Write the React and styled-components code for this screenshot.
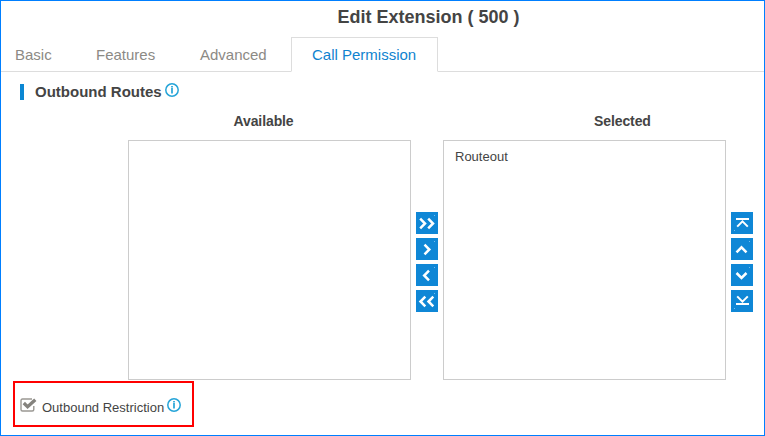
import React from "react";
import styled, { createGlobalStyle } from "styled-components";

const GlobalStyle = createGlobalStyle`
  * { box-sizing: border-box; }
  body { margin: 0; background: #fff; font-family: "Liberation Sans", Arial, sans-serif; }
`;

const Dialog = styled.main`
  width: 765px;
  height: 436px;
  border: 1px solid #007fff;
  background: #fff;
  color: #444;
  overflow: hidden;
`;

const Title = styled.h1`
  margin: 0;
  height: 36px;
  padding: 6px 0 0 336.5px;
  font-size: 18px;
  line-height: 20px;
  white-space: pre;
`;

const Tabs = styled.nav`
  display: flex;
  height: 35px;
  box-shadow: inset 0 -1px #ddd;
`;

const Tab = styled.button`
  flex: none;
  width: ${(p) => p.$width}px;
  height: 35px;
  padding: 1px 0 0 ${(p) => p.$inset}px;
  border: 1px solid ${(p) => (p.$active ? "#ddd" : "transparent")};
  border-bottom-color: ${(p) => (p.$active ? "#fff" : "transparent")};
  background: ${(p) => (p.$active ? "#fff" : "transparent")};
  color: ${(p) => (p.$active ? "#0f83cf" : "#8c8a85")};
  font: 15px/32px "Liberation Sans", Arial, sans-serif;
  text-align: left;
  white-space: nowrap;
`;

const SectionHeading = styled.h2`
  display: flex;
  margin: 12px 0 0 19px;
  height: 16px;
  padding-left: 11px;
  border-left: 4px solid #0b87d3;
  font-size: 15px;
  line-height: 16px;
  white-space: nowrap;
`;

const InfoSvg = styled.svg`
  flex: none;
  width: 14px;
  height: 14px;
  margin: ${(p) => p.$top}px 0 0 ${(p) => p.$gap}px;
`;

const Transfer = styled.section`
  display: flex;
  margin: 14px 0 0 127px;
`;

const Column = styled.div`
  width: 283px;
`;

const ColumnTitle = styled.h3`
  margin: 0;
  height: 26px;
  padding-left: ${(p) => p.$inset}px;
  font-size: 14px;
  line-height: 15px;
  letter-spacing: -0.1px;
`;

const List = styled.ul`
  height: 240px;
  margin: 0;
  padding: 8px 11px;
  border: 1px solid #ccc;
  list-style: none;
  font-size: 13px;
  line-height: 16px;
`;

const ButtonStack = styled.div`
  display: flex;
  flex-direction: column;
  gap: 4px;
  padding: 98px 5px 0;
`;

const IconButton = styled.button`
  display: block;
  width: 22px;
  height: 22px;
  padding: 0;
  border: 0;
  background: #0f87d6;

  svg {
    display: block;
  }
`;

const Restriction = styled.label`
  display: flex;
  width: 181px;
  height: 46px;
  margin: 1px 0 0 12px;
  padding: 14px 0 0 5px;
  border: 2px solid #f00;
  font-size: 13px;
  line-height: 22px;
  white-space: nowrap;
`;

const CheckSvg = styled.svg`
  flex: none;
  width: 18px;
  height: 16px;
  margin: 0 4px 0 0;
`;

const paths = {
  addAll: "M4.2 6.7L9 11.5L4.2 16.3M12.2 6.7L17 11.5L12.2 16.3",
  add: "M8.5 6.7L13.3 11.5L8.5 16.3",
  remove: "M13 6.7L8.2 11.5L13 16.3",
  removeAll: "M9.3 6.7L4.5 11.5L9.3 16.3M17.3 6.7L12.5 11.5L17.3 16.3",
  top: "M5 7H18M6.2 14.6L11.5 9.3L16.8 14.6",
  up: "M5.5 14.3L10.5 9.3L15.5 14.3",
  down: "M5.5 9L10.5 14L15.5 9",
  bottom: "M5 14H18M6.2 6.4L11.5 11.7L16.8 6.4",
};

function ActionButton({ action, label }) {
  const edge = action === "top" || action === "bottom";
  return (
    <IconButton aria-label={label}>
      <svg width="22" height="22" viewBox="0 0 22 22" fill="none" stroke="#fff">
        <path d={paths[action]} strokeWidth={edge ? 2 : 2.5} />
        <rect x={edge ? 3 : 18} y={edge ? 18 : 3} width="1" height="1" fill="#6fbcf0" stroke="none" />
      </svg>
    </IconButton>
  );
}

function Info({ top, gap }) {
  return (
    <InfoSvg $top={top} $gap={gap} viewBox="0 0 14 14" aria-hidden="true">
      <circle cx="7" cy="7" r="6.2" fill="none" stroke="#25a4d8" strokeWidth="1.5" />
      <path d="M7 3V4.6M7 5V10.5" stroke="#25a4d8" strokeWidth="1.7" />
    </InfoSvg>
  );
}

export default function App() {
  return (
    <>
      <GlobalStyle />
      <Dialog>
        <Title>Edit Extension ( 500 )</Title>
        <Tabs>
          <Tab $width={80} $inset={13}>Basic</Tab>
          <Tab $width={104} $inset={14}>Features</Tab>
          <Tab $width={106} $inset={14}>Advanced</Tab>
          <Tab $width={147} $inset={20} $active>Call Permission</Tab>
        </Tabs>
        <SectionHeading>
          Outbound Routes
          <Info top={-1} gap={3.2} />
        </SectionHeading>
        <Transfer>
          <Column>
            <ColumnTitle $inset={105.5}>Available</ColumnTitle>
            <List />
          </Column>
          <ButtonStack>
            <ActionButton action="addAll" label="Add all" />
            <ActionButton action="add" label="Add" />
            <ActionButton action="remove" label="Remove" />
            <ActionButton action="removeAll" label="Remove all" />
          </ButtonStack>
          <Column>
            <ColumnTitle $inset={151}>Selected</ColumnTitle>
            <List>
              <li>Routeout</li>
            </List>
          </Column>
          <ButtonStack>
            <ActionButton action="top" label="Move to top" />
            <ActionButton action="up" label="Move up" />
            <ActionButton action="down" label="Move down" />
            <ActionButton action="bottom" label="Move to bottom" />
          </ButtonStack>
        </Transfer>
        <Restriction>
          <CheckSvg viewBox="0 0 18 16" aria-hidden="true">
            <path d="M12 2H2.5Q1 2 1 3.5V12.5Q1 14 2.5 14H12.2Q13.8 14 13.8 12.5V9" fill="none" stroke="#9a9893" strokeWidth="1.4" />
            <path d="M3.8 6L7.6 9.8L15.3 2.7" fill="none" stroke="#85837e" strokeWidth="3.3" />
          </CheckSvg>
          Outbound Restriction
          <Info top={1} gap={3} />
        </Restriction>
      </Dialog>
    </>
  );
}
